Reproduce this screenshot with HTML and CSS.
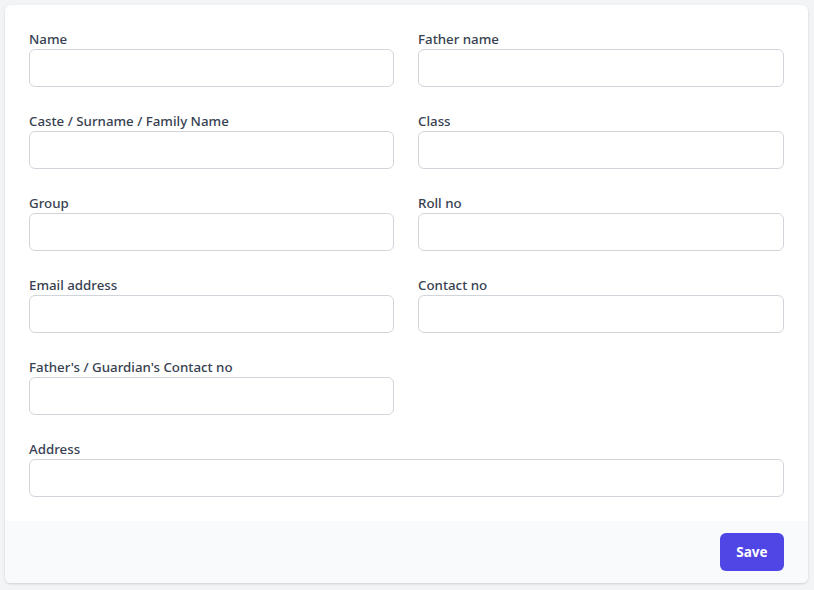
FILE: index.html
```html
<!DOCTYPE html>
<html>
<head>
<meta charset="utf-8">
<link rel="stylesheet" href="styles.css">
</head>
<body>
<form class="card">
  <div class="fields">
    <div class="field"><label>Name</label><input type="text"></div>
    <div class="field"><label>Father name</label><input type="text"></div>
    <div class="field"><label>Caste / Surname / Family Name</label><input type="text"></div>
    <div class="field"><label>Class</label><input type="text"></div>
    <div class="field"><label>Group</label><input type="text"></div>
    <div class="field"><label>Roll no</label><input type="text"></div>
    <div class="field"><label>Email address</label><input type="text"></div>
    <div class="field"><label>Contact no</label><input type="text"></div>
    <div class="field"><label>Father's / Guardian's Contact no</label><input type="text"></div>
    <div class="field full"><label>Address</label><input type="text"></div>
  </div>
  <div class="footer">
    <button type="button" class="save">Save</button>
  </div>
</form>
</body>
</html>
```
FILE: styles.css
```css
html, body { margin: 0; padding: 0; }
body {
  background: #f3f4f6;
  padding: 5px 6px 7px 5px;
  font-family: "Noto Sans", "Open Sans", sans-serif;
}
.card {
  background: #fff;
  border-radius: 6px;
  box-shadow: 0 1px 3px rgba(0,0,0,0.1), 0 1px 2px rgba(0,0,0,0.06);
  overflow: hidden;
  width: 803px;
}
.fields {
  display: grid;
  grid-template-columns: 365px 366px;
  column-gap: 24px;
  row-gap: 24px;
  padding: 24px;
}
.field { display: flex; flex-direction: column; }
.field.full { grid-column: 1 / -1; }
label {
  font-size: 13.3px;
  font-weight: 500;
  line-height: 20px;
  color: #374151;
}
input {
  height: 38px;
  box-sizing: border-box;
  border: 1px solid #d1d5db;
  border-radius: 6px;
  margin: 0;
  padding: 8px 12px;
  font: inherit;
  background: #fff;
}
.footer {
  background: #f9fafb;
  padding: 12px 24px;
  display: flex;
  justify-content: flex-end;
}
.save {
  height: 38px;
  width: 64px;
  background: #4f46e5;
  color: #fff;
  border: none;
  border-radius: 6px;
  font-family: inherit;
  font-size: 13.5px;
  font-weight: 700;
}
```
